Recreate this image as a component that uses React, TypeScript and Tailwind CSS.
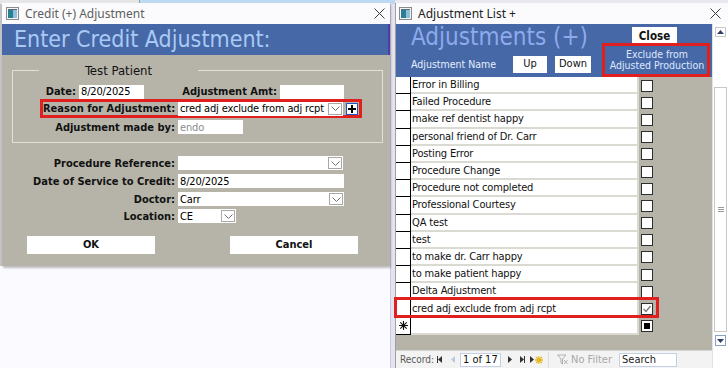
import React from "react";

const F = "font-['DejaVu_Sans_Condensed','Liberation_Sans',sans-serif]";
const UI = "font-['Noto_Sans','Open_Sans',sans-serif]";

function AppIcon() {
  return (
    <svg width="13" height="13" viewBox="0 0 13 13">
      <rect x="0.5" y="0.5" width="12" height="12" fill="#f4f4f4" stroke="#8a8a8a" />
      <rect x="2" y="3" width="5" height="8" fill="#2b7f94" />
      <rect x="7" y="3" width="4" height="8" fill="#8fc0d8" />
      <rect x="2" y="2" width="9" height="1" fill="#5a6a7a" />
    </svg>
  );
}

function CloseX() {
  return (
    <svg width="11" height="11" viewBox="0 0 11 11">
      <path d="M0.5 0.5 L10.5 10.5 M10.5 0.5 L0.5 10.5" stroke="#3c3c3c" strokeWidth="1" />
    </svg>
  );
}

function Chevron() {
  return (
    <svg width="9" height="5" viewBox="0 0 9 5">
      <path d="M0.5 0.5 L4.5 4.5 L8.5 0.5" stroke="#707070" fill="none" strokeWidth="1" />
    </svg>
  );
}

function Combo({ w, text }: { w: string; text?: string }) {
  return (
    <div className={`${w} ml-[3px] h-[14px] bg-white flex items-center`}>
      <span className="flex-1 pl-[2px] text-[11px] tracking-[-0.15px] text-black leading-none whitespace-nowrap overflow-hidden">{text}</span>
      <div className="w-[14px] h-[12px] mr-[1px] border border-[#a8a8a8] bg-white flex items-center justify-center shrink-0">
        <Chevron />
      </div>
    </div>
  );
}

function Label({ w, children }: { w: string; children: React.ReactNode }) {
  return <div className={`${w} text-right text-[11px] font-bold text-[#111] leading-none whitespace-nowrap`}>{children}</div>;
}

function Input({ w, text, gray }: { w: string; text?: string; gray?: boolean }) {
  return (
    <div className={`${w} ml-[3px] h-[14px] bg-white flex items-center pl-[2px] text-[11px] tracking-[-0.15px] leading-none ${gray ? "text-[#8c8c8c]" : "text-black"}`}>
      {text}
    </div>
  );
}

const rows = [
  "Error in Billing",
  "Failed Procedure",
  "make ref dentist happy",
  "personal friend of Dr. Carr",
  "Posting Error",
  "Procedure Change",
  "Procedure not completed",
  "Professional Courtesy",
  "QA test",
  "test",
  "to make dr. Carr happy",
  "to make patient happy",
  "Delta Adjustment",
  "cred adj exclude from adj rcpt",
];

function CheckBox({ state }: { state: "off" | "on" | "new" }) {
  return (
    <div className="w-[12px] h-[12px] border border-[#2e2e2e] bg-white flex items-center justify-center">
      {state === "on" && (
        <svg width="10" height="10" viewBox="0 0 10 10">
          <path d="M1.5 5 L4 7.5 L8.5 2" stroke="#7a7a7a" strokeWidth="1.3" fill="none" />
        </svg>
      )}
      {state === "new" && <div className="w-[6px] h-[6px] bg-black" />}
    </div>
  );
}

function Row({ text, state, star }: { text: string; state: "off" | "on" | "new"; star?: boolean }) {
  return (
    <div className="h-[17.2px] flex">
      <div className="w-[15px] bg-white border-r border-b border-black flex items-center justify-center">
        {star && (
          <svg width="9" height="9" viewBox="0 0 9 9">
            <path d="M4.5 0 V9 M0 4.5 H9 M1.3 1.3 L7.7 7.7 M7.7 1.3 L1.3 7.7" stroke="#111" strokeWidth="1.1" />
          </svg>
        )}
      </div>
      <div className="w-[228px] bg-white border-b-2 border-r-2 border-[#dad9d2] flex items-center pl-[1px] text-[11px] tracking-[-0.15px] text-[#111] leading-none whitespace-nowrap">
        {text}
      </div>
      <div className="ml-[2px] flex items-center">
        <CheckBox state={state} />
      </div>
    </div>
  );
}

function Tri({ dir, color = "#333" }: { dir: "l" | "r"; color?: string }) {
  return (
    <svg width="4" height="7" viewBox="0 0 4 7">
      {dir === "r" ? <path d="M0 0 L4 3.5 L0 7 Z" fill={color} /> : <path d="M4 0 L0 3.5 L4 7 Z" fill={color} />}
    </svg>
  );
}

export default function App() {
  return (
    <div className={`relative w-[728px] h-[368px] overflow-hidden bg-[#fbfbff] ${F}`}>
      {/* background desktop fragments */}
      <div className="absolute left-0 top-0 w-[728px] h-[4px] flex">
        <div className="w-[140px] bg-[#e6e6e6] border-r border-[#9a9a9a]" />
        <div className="w-[255px] bg-[#bcdaf2]" />
        <div className="flex-1 bg-[#e8e8ee]" />
      </div>
      <div className="absolute left-0 top-[4px] w-[2px] h-[262px] bg-[#c4c4c8]" />
      <div className="absolute left-[390px] top-[4px] w-[5px] h-[364px] bg-[#e4e4ee] border-l border-[#c8c8e6]" />

      {/* Left dialog: Credit (+) Adjustment */}
      <div className="absolute left-[2px] top-[3px] w-[388px] h-[263px] flex flex-col bg-[#b6b4a9] shadow-[1px_2px_2px_rgba(0,0,0,0.25)]">
        <div className="h-[21px] bg-[#fbfbfd] flex items-center pl-[4px] pr-[4px]">
          <AppIcon />
          <span className={`ml-[6px] text-[12px] text-[#5e5e5e] ${UI}`}>Credit (+) Adjustment</span>
          <span className="ml-auto mr-[1px]">
            <CloseX />
          </span>
        </div>
        <div className="h-[31px] bg-[#4668a6] border-r-[2px] border-[#4e3ea4] flex items-center pl-[12px]">
          <span className="text-[23px] text-[#a9caf5] leading-none whitespace-nowrap">Enter Credit Adjustment:</span>
        </div>
        <div className="flex-1 flex flex-col">
          {/* group box */}
          <div className="relative mt-[15px] ml-[10px] w-[371px] h-[73px] border border-[#e0dfd8] pt-[13px]">
            <div className="absolute left-[26px] -top-[8px] w-[159px] h-[16px] bg-[#b6b4a9] text-center text-[13px] text-[#111] leading-[16px]">
              Test Patient
            </div>
            <div className="h-[15px] flex items-center">
              <Label w="w-[63px]">Date:</Label>
              <Input w="w-[65px]" text="8/20/2025" />
              <Label w="w-[133px]">Adjustment Amt:</Label>
              <Input w="w-[64px]" />
            </div>
            <div className="ml-[27px] w-[322px] h-[19px] border-[3px] border-[#e0201e] flex items-center">
              <Label w="w-[132px]">Reason for Adjustment:</Label>
              <Combo w="w-[165px]" text="cred adj exclude from adj rcpt" />
              <div className="ml-[3px] w-[12px] h-[12px] border border-[#1f55c8] bg-white flex items-center justify-center">
                <svg width="8" height="8" viewBox="0 0 8 8">
                  <path d="M4 0 V8 M0 4 H8" stroke="#000" strokeWidth="2" />
                </svg>
              </div>
            </div>
            <div className="mt-[2px] h-[14px] flex items-center">
              <Label w="w-[162px]">Adjustment made by:</Label>
              <Input w="w-[65px]" text="endo" gray />
            </div>
          </div>
          {/* lower fields */}
          <div className="mt-[13px] h-[14px] flex items-center">
            <Label w="w-[173px]">Procedure Reference:</Label>
            <Combo w="w-[165px]" />
          </div>
          <div className="mt-[4px] h-[14px] flex items-center">
            <Label w="w-[173px]">Date of Service to Credit:</Label>
            <Input w="w-[166px]" text="8/20/2025" />
          </div>
          <div className="mt-[4px] h-[14px] flex items-center">
            <Label w="w-[173px]">Doctor:</Label>
            <Combo w="w-[166px]" text="Carr" />
          </div>
          <div className="mt-[3px] h-[14px] flex items-center">
            <Label w="w-[173px]">Location:</Label>
            <Combo w="w-[58px]" text="CE" />
          </div>
          <div className="mt-[13px] h-[18px] flex">
            <div className="ml-[25px] w-[128px] bg-white flex items-center justify-center text-[11px] font-bold text-[#111]">OK</div>
            <div className="ml-[75px] w-[128px] bg-white flex items-center justify-center text-[11px] font-bold text-[#111]">Cancel</div>
          </div>
        </div>
      </div>

      {/* Right dialog: Adjustment List + */}
      <div className="absolute left-[395px] top-[3px] w-[333px] h-[365px] flex flex-col bg-white border-l border-[#a0a0a0]">
        <div className="h-[21px] bg-[#fbfbfd] flex items-center pl-[3px] pr-[7px]">
          <AppIcon />
          <span className={`ml-[6px] text-[12px] text-[#222] ${UI}`}>Adjustment List +</span>
          <span className="ml-auto">
            <CloseX />
          </span>
        </div>
        <div className="flex-1 flex">
          <div className="w-[316px] flex flex-col bg-[#b6b4a9]">
            {/* header */}
            <div className="h-[53px] bg-[#4668a6] flex">
              <div className="w-[206px] flex flex-col">
                <div className="pl-[15px] h-[25px] text-[24px] leading-[27px] text-[#8eaaec] whitespace-nowrap">Adjustments (+)</div>
                <div className="mt-[7px] h-[17px] flex items-center">
                  <span className="pl-[15px] w-[117px] text-[10.5px] text-[#e6eeff] leading-none whitespace-nowrap">Adjustment Name</span>
                  <div className="w-[34px] h-[17px] bg-white flex items-center justify-center text-[11px] text-[#111]">Up</div>
                  <div className="ml-[8px] w-[36px] h-[17px] bg-white flex items-center justify-center text-[11px] text-[#111]">Down</div>
                </div>
              </div>
              <div className="flex-1 flex flex-col">
                <div className="mt-[3px] ml-[30px] w-[45px] h-[19px] bg-white flex items-center justify-center text-[11.5px] font-bold text-[#111]">Close</div>
                <div className="mt-[3px] text-center text-[10.5px] leading-[11px] text-[#dfe8ff]">
                  Exclude from
                  <br />
                  Adjusted Production
                </div>
              </div>
            </div>
            {/* rows */}
            <div className="flex flex-col">
              {rows.map((r, i) => (
                <Row key={i} text={r} state={i === rows.length - 1 ? "on" : "off"} />
              ))}
              <Row text="" state="new" star />
            </div>
            <div className="flex-1" />
            {/* nav bar */}
            <div className="h-[18px] bg-[#f3f3f3] border-t border-[#d4d4d4] flex items-center text-[10px] text-[#5a5a5a] leading-none">
              <span className="ml-[4px] w-[32px] whitespace-nowrap">Record:</span>
              <span className="ml-[5px] flex items-center">
                <span className="w-[1px] h-[7px] bg-[#333]" />
                <Tri dir="l" />
              </span>
              <span className="ml-[9px] flex">
                <Tri dir="l" color="#b8c8e0" />
              </span>
              <span className="ml-[5px] w-[41px] h-[14px] border border-[#c4d0e4] bg-white flex items-center pl-[2px] text-[11px] text-[#111] whitespace-nowrap">1 of 17</span>
              <span className="ml-[7px] flex">
                <Tri dir="r" />
              </span>
              <span className="ml-[8px] flex items-center">
                <Tri dir="r" />
                <span className="w-[1px] h-[7px] bg-[#333]" />
              </span>
              <span className="ml-[5px] flex items-center">
                <Tri dir="r" />
                <svg width="8" height="8" viewBox="0 0 8 8" className="ml-[1px]">
                  <path d="M4 0 V8 M0 4 H8 M1 1 L7 7 M7 1 L1 7" stroke="#e8b820" strokeWidth="1.3" />
                </svg>
              </span>
              <span className="ml-[5px] w-[1px] h-[16px] bg-[#dcdcdc]" />
              <span className="ml-[8px] flex">
                <svg width="11" height="11" viewBox="0 0 11 11">
                  <path d="M0.5 1 H9 L5.5 5 V10 L4 9 V5 Z" fill="none" stroke="#b0b0b0" />
                  <path d="M7 6 L10.5 10 M10.5 6 L7 10" stroke="#b0b0b0" />
                </svg>
              </span>
              <span className="ml-[3px] w-[48px] text-[11px] text-[#a8a8a8] whitespace-nowrap">No Filter</span>
              <span className="w-[58px] h-[14px] border border-[#c4d0e4] bg-white flex items-center pl-[2px] text-[11px] text-[#222]">Search</span>
            </div>
          </div>
          {/* scrollbar */}
          <div className="w-[16px] bg-white border-l border-[#e2e2e2] flex flex-col items-center">
            <div className="mt-[3px] w-[11px] h-[10px] border border-[#c8c8c8] flex items-center justify-center">
              <svg width="7" height="4" viewBox="0 0 7 4">
                <path d="M0 4 L3.5 0 L7 4 Z" fill="#2e3e66" />
              </svg>
            </div>
            <div className="mt-[50px] w-[13px] h-[245px] border border-[#c8c8c8] bg-white flex items-center justify-center">
              <svg width="6" height="5" viewBox="0 0 6 5">
                <path d="M0 0.5 H6 M0 2.5 H6 M0 4.5 H6" stroke="#9a9a9a" />
              </svg>
            </div>
            <div className="mt-[3px] w-[11px] h-[11px] border border-[#8aa0c8] flex items-center justify-center">
              <svg width="7" height="4" viewBox="0 0 7 4">
                <path d="M0 0 L3.5 4 L7 0 Z" fill="#2e3e66" />
              </svg>
            </div>
          </div>
        </div>
      </div>

      {/* annotation boxes */}
      <div className="absolute left-[602px] top-[43px] w-[108px] h-[34px] border-[3px] border-[#e0201e]" />
      <div className="absolute left-[394px] top-[297px] w-[265px] h-[21px] border-[3px] border-[#e0201e]" />
    </div>
  );
}
